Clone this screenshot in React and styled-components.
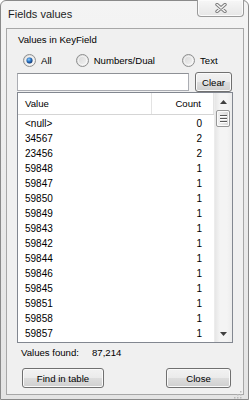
import React from "react";
import styled, {createGlobalStyle} from "styled-components";

const GlobalStyle = createGlobalStyle`
  html, body {
    margin: 0;
    padding: 0;
    background: #ffffff;
  }
  body {
    font-family: "Liberation Sans", Arial, sans-serif;
  }
`

const Window = styled.div`
  box-sizing: border-box;
  width: 249px;
  height: 400px;
  display: flex;
  flex-direction: column;
  border: 1px solid #8a8a8a;
  border-radius: 6px 6px 0 0;
  background: linear-gradient(#f4f4f4, #e9e9e9 60%, #e4e4e4);
  padding: 0 4px 4px 5px;
`

const TitleBar = styled.div`
  height: 27px;
  display: flex;
  justify-content: space-between;
  align-items: flex-start;
  flex-shrink: 0;
`

const Title = styled.div`
  font-size: 11px;
  color: #1e1e1e;
  margin: 7px 0 0 2px;
  line-height: 13px;
`

const CloseCaption = styled.div`
  box-sizing: border-box;
  width: 47px;
  height: 17px;
  margin-top: -1px;
  border: 1px solid #9a9a9a;
  border-top: none;
  border-radius: 0 0 4px 4px;
  background: linear-gradient(#f7f7f7, #e6e6e6);
  box-shadow: inset 0 0 0 1px #fbfbfb;
  display: flex;
  align-items: center;
  justify-content: center;
`

const Client = styled.div`
  box-sizing: border-box;
  flex: 1;
  border: 1px solid #a7a7a7;
  background: #f0f0f0;
  display: flex;
  flex-direction: column;
  position: relative;
`

const Caption = styled.div`
  font-size: 9.6px;
  line-height: 12px;
  margin: 5px 0 0 11px;
  color: #000;
`

const RadioRow = styled.div`
  display: flex;
  height: 14px;
  margin-top: 7px;
  align-items: center;
`

const RadioItem = styled.label`
  display: flex;
  align-items: center;
  gap: 5px;
  font-size: 9.6px;
  color: #000;
  margin-left: ${p => p.$left}px;
`

const SearchRow = styled.div`
  display: flex;
  align-items: flex-start;
  margin: 5px 0 0 10px;
  gap: 6px;
  height: 20px;
`

const SearchInput = styled.div`
  box-sizing: border-box;
  width: 172px;
  height: 18px;
  margin-top: 1px;
  background: #fff;
  border: 1px solid #abadb3;
  border-top-color: #8e9196;
`

const Button = styled.div`
  box-sizing: border-box;
  width: ${p => p.$width}px;
  height: 20px;
  border: 1px solid #707070;
  border-radius: 3px;
  background: linear-gradient(#f2f2f2 0%, #ebebeb 48%, #dddddd 52%, #cfcfcf 100%);
  box-shadow: inset 0 0 0 1px #fafafa;
  font-size: 9.6px;
  color: #000;
  display: flex;
  align-items: center;
  justify-content: center;
`

const List = styled.div`
  box-sizing: border-box;
  width: 216px;
  height: 251px;
  margin: 0 0 0 10px;
  border: 1px solid #828790;
  background: #fff;
  display: flex;
  overflow: hidden;
`

const Grid = styled.div`
  flex: 1;
  display: flex;
  flex-direction: column;
`

const HeaderRow = styled.div`
  display: grid;
  grid-template-columns: 134px 1fr;
  height: 21px;
  border-bottom: 1px solid #d5d5d5;
  background: #fff;
  font-size: 9.6px;
  color: #000;
  flex-shrink: 0;
  margin-bottom: 1px;
`

const HeaderCell = styled.div`
  display: flex;
  align-items: center;
  padding: 0 ${p => p.$right ? 12 : 0}px 0 ${p => p.$right ? 0 : 7}px;
  justify-content: ${p => p.$right ? "flex-end" : "flex-start"};
  border-right: 1px solid #e3e3e3;
`

const Row = styled.div`
  display: grid;
  grid-template-columns: 134px 1fr;
  height: 15px;
  font-size: 10px;
  color: #000;
  flex-shrink: 0;
`

const Cell = styled.div`
  display: flex;
  align-items: center;
  padding: 0 ${p => p.$right ? 12 : 0}px 0 ${p => p.$right ? 0 : 7}px;
  justify-content: ${p => p.$right ? "flex-end" : "flex-start"};
`

const ScrollBar = styled.div`
  width: 17px;
  flex-shrink: 0;
  display: flex;
  flex-direction: column;
  background: linear-gradient(90deg, #e6e6e6, #f4f4f4 30%, #f4f4f4 70%, #ececec);
  border-left: 1px solid #ececec;
`

const Arrow = styled.div`
  height: 17px;
  display: flex;
  align-items: center;
  justify-content: center;
`

const Track = styled.div`
  flex: 1;
  padding: 0 2px 0 1px;
`

const Thumb = styled.div`
  box-sizing: border-box;
  height: 17px;
  border: 1px solid #979797;
  border-radius: 2px;
  background: linear-gradient(90deg, #f3f3f3, #e6e6e6 50%, #d6d6d6);
  box-shadow: inset 0 0 0 1px #fbfbfb;
  display: flex;
  flex-direction: column;
  align-items: center;
  justify-content: center;
  gap: 1px;
`

const GripLine = styled.div`
  width: 7px;
  height: 1px;
  background: #5a5a5a;
  box-shadow: 0 1px 0 #ffffff;
  margin-bottom: 1px;
`

const FoundRow = styled.div`
  display: flex;
  font-size: 9.6px;
  line-height: 12px;
  color: #000;
  margin: 4px 0 0 14px;
`

const FoundValue = styled.span`
  margin-left: 13px;
`

const ButtonRow = styled.div`
  display: flex;
  justify-content: space-between;
  margin: 9px 12px 0 15px;
`

const Grip = styled.div`
  position: absolute;
  right: 1px;
  bottom: 1px;
  width: 8px;
  height: 8px;
`

const rows = [
    ["<null>", 0], ["34567", 2], ["23456", 2], ["59848", 1], ["59847", 1],
    ["59850", 1], ["59849", 1], ["59843", 1], ["59842", 1], ["59844", 1],
    ["59846", 1], ["59845", 1], ["59851", 1], ["59858", 1], ["59857", 1],
];

const Radio = ({checked}) => (
    <svg width="13" height="13" viewBox="0 0 13 13">
        <defs>
            <linearGradient id="rb" x1="0" y1="0" x2="1" y2="1">
                <stop offset="0" stopColor="#d4d4d4"/>
                <stop offset="1" stopColor="#f7f7f7"/>
            </linearGradient>
            <radialGradient id="rd" cx="0.4" cy="0.35" r="0.7">
                <stop offset="0" stopColor="#8fd0ff"/>
                <stop offset="0.5" stopColor="#2a73c3"/>
                <stop offset="1" stopColor="#0b2d68"/>
            </radialGradient>
        </defs>
        <circle cx="6.5" cy="6.5" r="6" fill="url(#rb)" stroke="#8e8f8f"/>
        <circle cx="6.5" cy="6.5" r="4.2" fill="none" stroke="#ffffff" strokeOpacity="0.6"/>
        {checked && <circle cx="6.5" cy="6.5" r="3" fill="url(#rd)"/>}
    </svg>
);

const CloseGlyph = () => (
    <svg width="12" height="10" viewBox="0 0 12 10">
        <path d="M2 1.5 L10 8.5 M10 1.5 L2 8.5" stroke="#7a7a7a" strokeWidth="3.4" strokeLinecap="round"/>
        <path d="M2 1.5 L10 8.5 M10 1.5 L2 8.5" stroke="#f4f4f4" strokeWidth="1.6" strokeLinecap="round"/>
    </svg>
);

const UpArrow = () => (
    <svg width="7" height="4" viewBox="0 0 7 4"><path d="M0 4 L3.5 0 L7 4 Z" fill="#404040"/></svg>
);

const DownArrow = () => (
    <svg width="7" height="4" viewBox="0 0 7 4"><path d="M0 0 L3.5 4 L7 0 Z" fill="#404040"/></svg>
);

const SizeGrip = () => (
    <svg width="8" height="8" viewBox="0 0 8 8">
        {[[6, 0], [6, 3], [3, 3], [6, 6], [3, 6], [0, 6]].map(([x, y], i) => (
            <rect key={i} x={x} y={y} width="1.5" height="1.5" fill="#b8b8b8"/>
        ))}
    </svg>
);

const App = () => {
    return (
        <>
            <GlobalStyle/>
            <Window>
                <TitleBar>
                    <Title>Fields values</Title>
                    <CloseCaption><CloseGlyph/></CloseCaption>
                </TitleBar>
                <Client>
                    <Caption>Values in KeyField</Caption>
                    <RadioRow>
                        <RadioItem $left={16}><Radio checked/>All</RadioItem>
                        <RadioItem $left={24}><Radio/>Numbers/Dual</RadioItem>
                        <RadioItem $left={27}><Radio/>Text</RadioItem>
                    </RadioRow>
                    <SearchRow>
                        <SearchInput/>
                        <Button $width={37}>Clear</Button>
                    </SearchRow>
                    <List>
                        <Grid>
                            <HeaderRow>
                                <HeaderCell>Value</HeaderCell>
                                <HeaderCell $right>Count</HeaderCell>
                            </HeaderRow>
                            {rows.map(([value, count]) => (
                                <Row key={value}>
                                    <Cell>{value}</Cell>
                                    <Cell $right>{count}</Cell>
                                </Row>
                            ))}
                        </Grid>
                        <ScrollBar>
                            <Arrow><UpArrow/></Arrow>
                            <Track>
                                <Thumb>
                                    <GripLine/>
                                    <GripLine/>
                                    <GripLine/>
                                </Thumb>
                            </Track>
                            <Arrow><DownArrow/></Arrow>
                        </ScrollBar>
                    </List>
                    <FoundRow>
                        Values found:
                        <FoundValue>87,214</FoundValue>
                    </FoundRow>
                    <ButtonRow>
                        <Button $width={82}>Find in table</Button>
                        <Button $width={65}>Close</Button>
                    </ButtonRow>
                    <Grip><SizeGrip/></Grip>
                </Client>
            </Window>
        </>
    );
}

export default App;
